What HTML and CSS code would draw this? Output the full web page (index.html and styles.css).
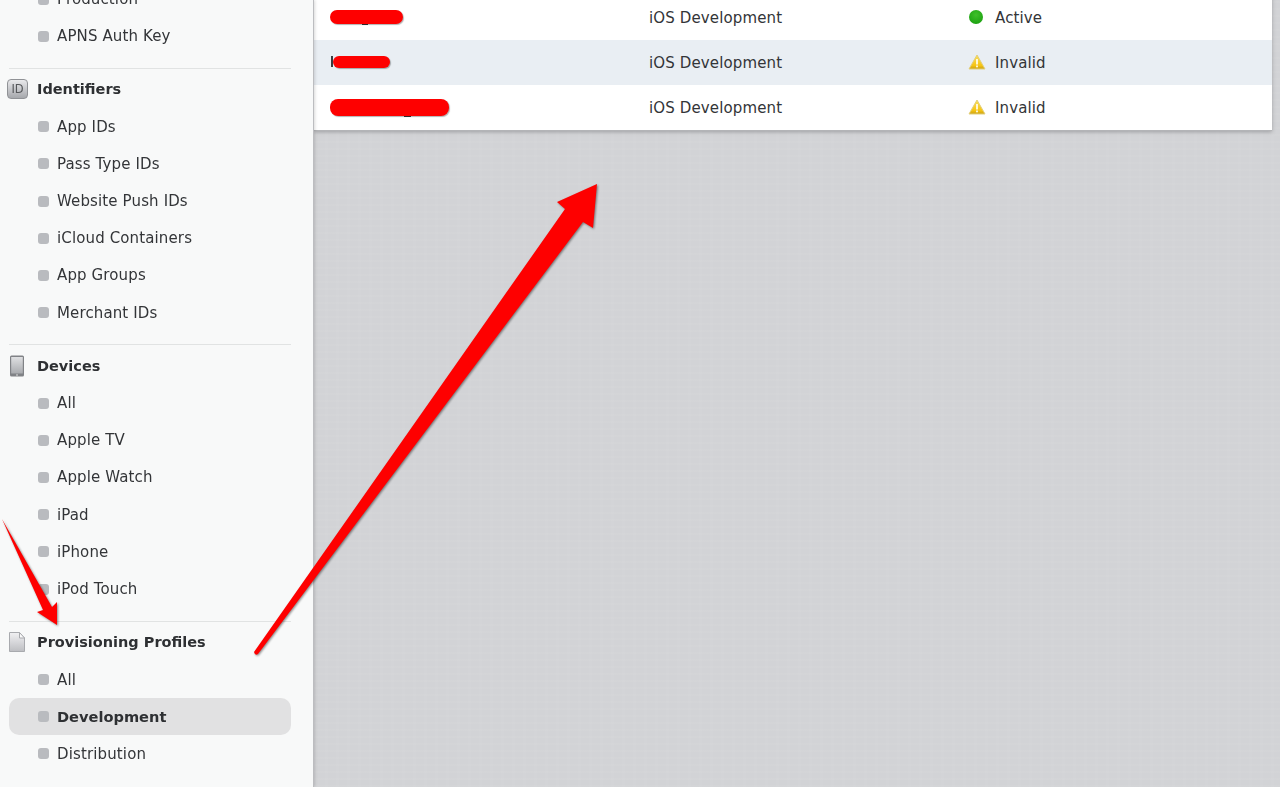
FILE: index.html
```html
<!DOCTYPE html>
<html lang="en">
<head>
    <meta charset="UTF-8">
    <title>Certificates, Identifiers &amp; Profiles</title>
    <link rel="stylesheet" href="styles.css">
</head>
<body>
    <div class="page">
        <aside class="sidebar">
            <div class="sidebar-inner">
                <section class="group">
                    <ul class="items">
                        <li>Production</li>
                        <li>APNS Auth Key</li>
                    </ul>
                </section>

                <section class="group">
                    <h2><span class="icon id-icon">ID</span>Identifiers</h2>
                    <ul class="items">
                        <li>App IDs</li>
                        <li>Pass Type IDs</li>
                        <li>Website Push IDs</li>
                        <li>iCloud Containers</li>
                        <li>App Groups</li>
                        <li>Merchant IDs</li>
                    </ul>
                </section>

                <section class="group">
                    <h2>
                        <span class="icon tablet-icon">
                            <svg width="16" height="22" viewBox="0 0 16 22">
                                <defs>
                                    <linearGradient id="tabletScreen" x1="0" y1="0" x2="0" y2="1">
                                        <stop offset="0" stop-color="#dfe0e2"/>
                                        <stop offset="1" stop-color="#a9abaf"/>
                                    </linearGradient>
                                </defs>
                                <rect x="1" y="0.5" width="14" height="21" rx="1.5" fill="#808286"/>
                                <rect x="2.2" y="2" width="11.6" height="16.5" fill="url(#tabletScreen)"/>
                                <circle cx="8" cy="20" r="0.8" fill="#e8e8e8"/>
                            </svg>
                        </span>Devices
                    </h2>
                    <ul class="items">
                        <li>All</li>
                        <li>Apple TV</li>
                        <li>Apple Watch</li>
                        <li>iPad</li>
                        <li>iPhone</li>
                        <li>iPod Touch</li>
                    </ul>
                </section>

                <section class="group">
                    <h2>
                        <span class="icon doc-icon">
                            <svg width="18" height="20" viewBox="0 0 18 20">
                                <defs>
                                    <linearGradient id="docFill" x1="0" y1="0" x2="0" y2="1">
                                        <stop offset="0" stop-color="#f1f1f3"/>
                                        <stop offset="1" stop-color="#bdbec2"/>
                                    </linearGradient>
                                </defs>
                                <path d="M1.5 0.5H11.5L16.5 6V19.5H1.5Z" fill="url(#docFill)" stroke="#a8aaae"/>
                                <path d="M11.5 0.5V6H16.5Z" fill="#fbfbfb" stroke="#a8aaae"/>
                            </svg>
                        </span>Provisioning Profiles
                    </h2>
                    <ul class="items">
                        <li>All</li>
                        <li class="selected">Development</li>
                        <li>Distribution</li>
                    </ul>
                </section>
            </div>
        </aside>

        <main class="content">
            <div class="profiles">
                <div class="row">
                    <div class="name"><span class="redact redact-1"></span></div>
                    <div class="type">iOS Development</div>
                    <div class="status">
                        <span class="dot"></span>Active
                    </div>
                </div>
                <div class="row alt">
                    <div class="name"><span class="redact redact-2"></span></div>
                    <div class="type">iOS Development</div>
                    <div class="status">
                        <svg class="warn" width="18" height="16" viewBox="0 0 18 16">
                            <path d="M9 1L17 15H1Z" fill="url(#warnFill)" stroke="#e3cf7a" stroke-linejoin="round"/>
                            <rect x="8.1" y="5" width="1.8" height="5.5" fill="#fffbe8"/>
                            <rect x="8.1" y="11.5" width="1.8" height="1.8" fill="#fffbe8"/>
                        </svg>Invalid
                    </div>
                </div>
                <div class="row">
                    <div class="name"><span class="redact redact-3"></span></div>
                    <div class="type">iOS Development</div>
                    <div class="status">
                        <svg class="warn" width="18" height="16" viewBox="0 0 18 16">
                            <defs>
                                <linearGradient id="warnFill" x1="0" y1="0" x2="0" y2="1">
                                    <stop offset="0" stop-color="#fbe05a"/>
                                    <stop offset="0.75" stop-color="#f6c413"/>
                                    <stop offset="1" stop-color="#c9a013"/>
                                </linearGradient>
                            </defs>
                            <path d="M9 1L17 15H1Z" fill="url(#warnFill)" stroke="#e3cf7a" stroke-linejoin="round"/>
                            <rect x="8.1" y="5" width="1.8" height="5.5" fill="#fffbe8"/>
                            <rect x="8.1" y="11.5" width="1.8" height="1.8" fill="#fffbe8"/>
                        </svg>Invalid
                    </div>
                </div>
            </div>
        </main>

        <!-- annotation arrows drawn over the screenshot -->
        <svg class="arrows" width="1280" height="787" viewBox="0 0 1280 787">
            <path d="M254 652L565 209L557 202L597 184L593 228L583 222L258 654Q255 656 254 652Z" fill="#fe0000"/>
            <path d="M2 519L43 610L37 612L57 625L57 602L52 607Z" fill="#fe0000"/>
        </svg>
    </div>
</body>
</html>
```

FILE: styles.css
```css
* {
    box-sizing: border-box;
}
html, body {
    margin: 0;
    height: 100%;
    overflow: hidden;
}
body {
    font-family: "DejaVu Sans", "Liberation Sans", sans-serif;
    font-size: 15px;
    letter-spacing: 0.13px;
    color: #333538;
}
.page {
    position: relative;
    display: flex;
    width: 1280px;
    height: 787px;
    overflow: hidden;
    filter: blur(0.45px);
}

/* sidebar */
.sidebar {
    flex: 0 0 314px;
    height: 100%;
    overflow: hidden;
    background-color: #f8f9f9;
    border-right: 1px solid #bcbdc0;
    box-shadow: 1px 0 3px rgba(0,0,0,0.15);
    z-index: 1;
}
.sidebar-inner {
    margin-top: -19.6px;
    padding: 0 22px 0 9px;
}
.group {
    padding-bottom: 13px;
    margin-bottom: 1.3px;
    border-bottom: 1px solid #e1e3e3;
}
.group:last-child {
    border-bottom: none;
}
.group h2 {
    display: flex;
    align-items: center;
    height: 38px;
    margin: 0 0 0 -2px;
    padding-left: 30px;
    position: relative;
    font-size: 14.5px;
    font-weight: bold;
    letter-spacing: 0;
    color: #2e3033;
}
.icon {
    position: absolute;
    left: 0;
    top: 50%;
    transform: translateY(-50%);
    display: flex;
}
.tablet-icon {
    left: 2px;
}
.doc-icon {
    left: 1px;
}
.id-icon {
    width: 21px;
    height: 20px;
    align-items: center;
    justify-content: center;
    font-size: 11.5px;
    font-weight: normal;
    color: #55575a;
    border: 1px solid #909296;
    border-radius: 4px;
    background: linear-gradient(#e9e9eb, #a6a8ac);
}
.items {
    list-style: none;
    margin: 0;
    padding: 0;
}
.items li {
    display: flex;
    align-items: center;
    gap: 8px;
    height: 37.2px;
    padding-left: 29px;
    border-radius: 10px;
}
.items li::before {
    content: "";
    flex: 0 0 11px;
    height: 11px;
    border-radius: 3px;
    background-color: #b9bbbf;
}
.items li.selected {
    background-color: #e1e1e2;
    font-size: 14.6px;
    font-weight: bold;
    letter-spacing: 0;
    color: #2e3033;
}

/* profile list */
.content {
    flex: 1;
    height: 100%;
    background-color: #d2d3d6;
    background-image:
        repeating-linear-gradient(0deg, rgba(255,255,255,0.035) 0 2px, transparent 2px 7px),
        repeating-linear-gradient(90deg, rgba(255,255,255,0.03) 0 3px, transparent 3px 11px);
}
.profiles {
    width: 958px;
    margin-top: -5px;
    background: white;
    box-shadow: 0 1px 0 #b3b4b7, 0 2px 4px rgba(0,0,0,0.25);
}
.row {
    display: grid;
    grid-template-columns: 335px 320px 1fr;
    align-items: center;
    height: 45px;
}
.row.alt {
    background-color: #e9eef3;
}
.name {
    padding-left: 16px;
    isolation: isolate;
}
.redact {
    display: block;
    position: relative;
    height: 14px;
    background-color: #fe0000;
    border-radius: 7px;
    box-shadow: 1px 1px 1px rgba(0,0,0,0.3);
}
/* bits of the hidden name that stick out of the marker */
.redact::before {
    content: "";
    position: absolute;
    z-index: -1;
    background-color: #3a3c40;
}
.redact-1 {
    width: 73px;
    margin-top: -2px;
}
.redact-1::before {
    left: 32px;
    top: 12px;
    width: 6px;
    height: 3px;
}
.redact-2 {
    width: 57px;
    height: 12px;
    margin-left: 3px;
    margin-top: -2px;
}
.redact-2::before {
    left: -2px;
    top: 0;
    width: 2px;
    height: 11px;
}
.redact-3 {
    width: 119px;
    height: 17px;
    border-radius: 8px;
}
.redact-3::before {
    left: 74px;
    top: 15px;
    width: 7px;
    height: 3px;
}
.status {
    display: flex;
    align-items: center;
}
.dot {
    width: 14px;
    height: 14px;
    margin-right: 12px;
    margin-bottom: 1px;
    border-radius: 50%;
    background: radial-gradient(circle at 50% 35%, #3fc02a, #149a0b);
}
.warn {
    margin-right: 9px;
    margin-left: -1px;
    margin-bottom: 1px;
}

/* arrows */
.arrows {
    position: absolute;
    left: 0;
    top: 0;
    z-index: 2;
    filter: drop-shadow(1px 1px 1px rgba(0,0,0,0.45));
}
```
